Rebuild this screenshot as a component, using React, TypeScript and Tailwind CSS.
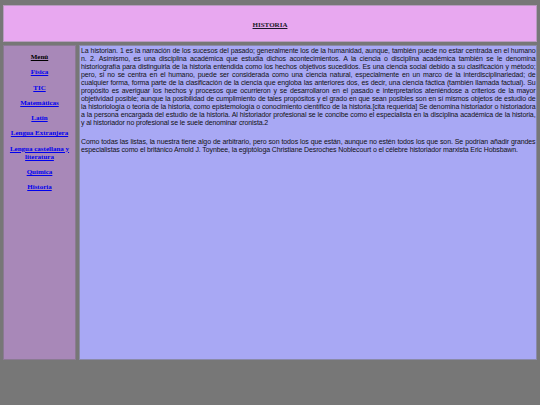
const links = ['Física', 'TIC', 'Matemáticas', 'Latín', 'Lengua Extranjera', 'Lengua castellana y literatura', 'Química', 'Historia'];

export default function App() {
  return (
    <div className="w-[540px] h-[405px] bg-[#777777] pt-[5px] px-[3px] overflow-hidden">
      <header className="h-[37px] bg-[#e8a8f0] border border-[#b89ac0] flex items-center justify-center pt-[3px]">
        <h1 className="font-['Liberation_Serif',serif] font-bold text-[7px] underline text-[#1a1a2a]">HISTORIA</h1>
      </header>
      <div className="flex gap-[3px] mt-[3px] h-[315px]">
        <nav className="w-[73px] bg-[#a888b8] border border-[#8a7a92] flex flex-col items-center pt-[7px] gap-[7.3px] font-['Liberation_Serif',serif] font-bold text-[7px] leading-[8px] text-center">
          <span className="underline text-black">Menú</span>
          {links.map((l) => (
            <a key={l} href="#" className="underline text-[#0000ee] px-[3px]">
              {l}
            </a>
          ))}
        </nav>
        <main className="flex-1 bg-[#a8a8f4] border border-[#8a8aa8] pl-[1px] pr-[0.5px] pt-[0.5px] font-['Liberation_Sans',Arial,sans-serif] text-[7px] tracking-[-0.11px] leading-[8.05px] text-[#111] text-justify">
          <p>
            La historian. 1 es la narración de los sucesos del pasado; generalmente los de la humanidad, aunque, también puede no estar centrada en el humano n. 2. Asimismo, es una disciplina académica que estudia dichos acontecimientos. A la ciencia o disciplina académica también se le denomina historiografía para distinguirla de la historia entendida como los hechos objetivos sucedidos. Es una ciencia social debido a su clasificación y método; pero, si no se centra en el humano, puede ser considerada como una ciencia natural, especialmente en un marco de la interdisciplinariedad; de cualquier forma, forma parte de la clasificación de la ciencia que engloba las anteriores dos, es decir, una ciencia fáctica (también llamada factual). Su propósito es averiguar los hechos y procesos que ocurrieron y se desarrollaron en el pasado e interpretarlos ateniéndose a criterios de la mayor objetividad posible; aunque la posibilidad de cumplimiento de tales propósitos y el grado en que sean posibles son en sí mismos objetos de estudio de la historiología o teoría de la historia, como epistemología o conocimiento científico de la historia.[cita requerida] Se denomina historiador o historiadora a la persona encargada del estudio de la historia. Al historiador profesional se le concibe como el especialista en la disciplina académica de la historia, y al historiador no profesional se le suele denominar cronista.2
          </p>
          <p className="mt-[11px]">
            Como todas las listas, la nuestra tiene algo de arbitrario, pero son todos los que están, aunque no estén todos los que son. Se podrían añadir grandes especialistas como el británico Arnold J. Toynbee, la egiptóloga Christiane Desroches Noblecourt o el célebre historiador marxista Eric Hobsbawn.
          </p>
        </main>
      </div>
    </div>
  );
}
